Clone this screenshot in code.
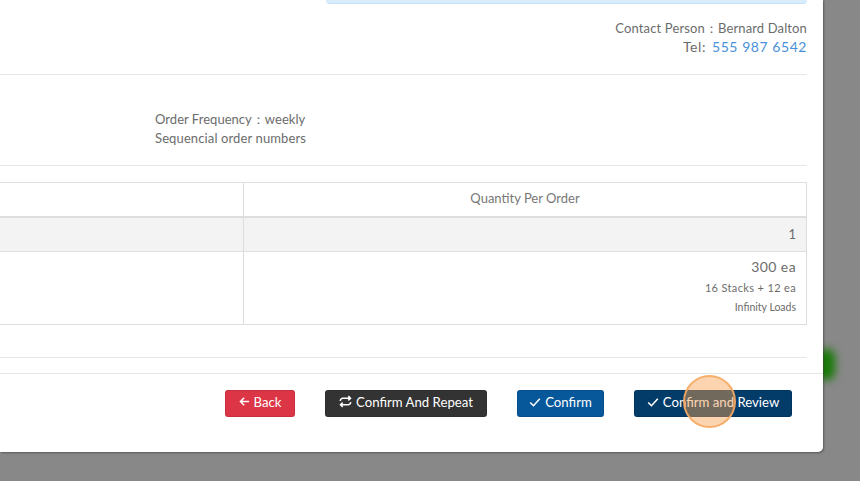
<script>
  const rows = [
    { label: 'Quantity Per Order' }
  ];
</script>

<div class="page">
  <div class="glow"></div>
  <div class="modal">
    <div class="body">
      <div class="alert"></div>
      <div class="contact">
        <div class="line">Contact Person：Bernard Dalton</div>
        <div class="line tel-line"><span class="tel-label">Tel:</span><span class="tel">555 987 6542</span></div>
      </div>
      <hr class="rule first" />
      <div class="order">
        <div class="freq">Order Frequency：weekly</div>
        <div>Sequencial order numbers</div>
      </div>
      <hr class="rule second" />
      <div class="table">
        <div class="cell head"></div>
        <div class="cell head last center">{rows[0].label}</div>
        <div class="cell sub"></div>
        <div class="cell sub last right">1</div>
        <div class="cell main"></div>
        <div class="cell main last right">
          <div class="qty">300 ea</div>
          <div class="small stacks">16 Stacks + 12 ea</div>
          <div class="small loads">Infinity Loads</div>
        </div>
      </div>
      <hr class="rule third" />
    </div>
    <div class="footer">
      <button class="btn back">
        <svg viewBox="0 0 12 12" width="11" height="11"><path d="M11 6H1.6M5.6 2 1.6 6l4 4" /></svg>
        Back
      </button>
      <button class="btn repeat">
        <svg viewBox="0 0 14 14" width="13" height="13"><path d="M1.5 6.5V6A2.5 2.5 0 0 1 4 3.5h8M10 1.2l2.4 2.3L10 5.8M12.5 7.500V8A2.500 2.500 0 0 1 10 10.500H2M4 8.200 1.600 10.500 4 12.800" /></svg>
        Confirm And Repeat
      </button>
      <button class="btn confirm">
        <svg viewBox="0 0 12 12" width="12" height="12"><path d="M1.200 6.500 4.500 9.700 10.800 2.800" /></svg>
        Confirm
      </button>
      <button class="btn review">
        <svg viewBox="0 0 12 12" width="12" height="12"><path d="M1.200 6.500 4.500 9.700 10.800 2.800" /></svg>
        Confirm and Review
      </button>
    </div>
  </div>
  <div class="spot"></div>
</div>

<style>
  :global(body) {
    margin: 0;
    overflow: hidden;
  }
  .page {
    position: relative;
    width: 860px;
    height: 481px;
    overflow: hidden;
    background: #888888;
    font-family: "Lato", "Open Sans", sans-serif;
    color: #6c6c6c;
    font-size: 13px;
  }
  .glow {
    position: absolute;
    left: 814px;
    top: 349px;
    width: 21px;
    height: 31px;
    border-radius: 8px;
    background: #177a06;
    filter: blur(4px);
  }
  .modal {
    position: relative;
    width: 823px;
    height: 452px;
    background: #ffffff;
    border-radius: 0 0 5px 0;
    box-shadow: 1px 1px 2px rgba(60, 60, 60, 0.6);
    display: flex;
    flex-direction: column;
  }
  .body {
    padding-right: 16px;
    height: 373px;
    display: flex;
    flex-direction: column;
  }
  .alert {
    align-self: flex-end;
    width: 481px;
    height: 3px;
    background: #d9ecfb;
    border-bottom: 1px solid #c6e2f8;
    border-radius: 0 0 4px 4px;
  }
  .contact {
    margin-top: 15px;
    text-align: right;
    font-size: 13px;
    letter-spacing: 0.13px;
  }
  .line {
    height: 19px;
    line-height: 19px;
  }
  .tel-line {
    line-height: 17px;
  }
  .tel-label {
    font-size: 14px;
    letter-spacing: 0.6px;
    margin-right: 6px;
  }
  .tel {
    color: #4a90d9;
    font-size: 14px;
    letter-spacing: 0.55px;
  }
  .rule {
    margin: 0;
    border: 0;
    border-top: 1px solid #e6e6e6;
  }
  .rule.first {
    margin-top: 17px;
  }
  .order {
    margin: 35px 0 0 155px;
    line-height: 19px;
    letter-spacing: 0.12px;
  }
  .freq {
    letter-spacing: 0.03px;
  }
  .rule.second {
    margin-top: 17px;
  }
  .table {
    margin-top: 16px;
    display: grid;
    grid-template-columns: 243px 1fr;
    grid-template-rows: 35px 34px 72px;
    border-top: 1px solid #e0e0e0;
    border-right: 1px solid #dddddd;
    border-bottom: 1px solid #dddddd;
  }
  .cell {
    padding: 0 10px;
    border-bottom: 1px solid #e0e0e0;
    box-sizing: border-box;
  }
  .cell.last {
    border-left: 1px solid #dddddd;
  }
  .cell.head {
    border-bottom: 2px solid #dddddd;
  }
  .cell.main {
    border-bottom: 0;
  }
  .cell.sub {
    background: #f3f3f3;
  }
  .center {
    display: flex;
    align-items: center;
    justify-content: center;
    color: #777777;
    padding-bottom: 4px;
  }
  .right {
    text-align: right;
  }
  .cell.sub.right {
    line-height: 32px;
  }
  .qty {
    margin-top: 5px;
    margin-bottom: 1px;
    font-size: 14px;
    line-height: 20px;
    letter-spacing: 0.4px;
  }
  .small {
    line-height: 19px;
  }
  .stacks {
    font-size: 11px;
    letter-spacing: 0.35px;
  }
  .loads {
    font-size: 10.5px;
    line-height: 20px;
  }
  .rule.third {
    margin-top: auto;
    margin-bottom: 15px;
  }
  .footer {
    height: 79px;
    box-sizing: border-box;
    border-top: 1px solid #e6e6e6;
    padding: 16px 31px 0 225px;
    display: flex;
    align-items: flex-start;
    gap: 30px;
  }
  .btn {
    height: 27px;
    border: 1px solid rgba(0, 0, 0, 0.1);
    border-radius: 3px;
    color: #ffffff;
    font: inherit;
    font-size: 13.2px;
    padding: 0 0 4px;
    display: flex;
    align-items: center;
    justify-content: center;
    gap: 4px;
    box-sizing: border-box;
    white-space: nowrap;
  }
  .btn svg {
    flex-shrink: 0;
    fill: none;
    stroke: #ffffff;
    stroke-width: 1.6;
  }
  .back {
    background: #dc3545;
    width: 70px;
  }
  .repeat {
    background: #333333;
    width: 162px;
  }
  .confirm {
    background: #07589a;
    width: 87px;
  }
  .review {
    background: #033c69;
    width: 158px;
  }
  .spot {
    position: absolute;
    left: 683px;
    top: 375px;
    width: 53px;
    height: 53px;
    box-sizing: border-box;
    border-radius: 50%;
    border: 2px solid rgba(245, 170, 100, 0.9);
    background: rgba(250, 160, 80, 0.45);
  }
</style>
